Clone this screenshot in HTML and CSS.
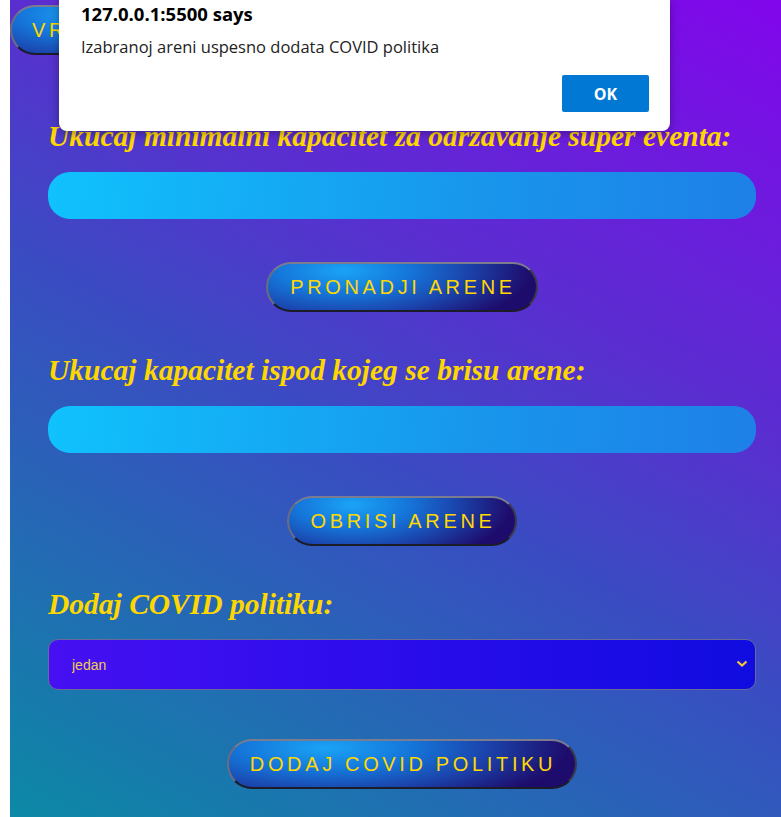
FILE: index.html
```html
<!DOCTYPE html>
<html lang="sr">
<head>
<meta charset="utf-8">
<title>Arene</title>
<link rel="stylesheet" href="styles.css">
</head>
<body>
<div class="page">
  <div class="topbar">
    <button class="btn btn-back">VRATI SE NAZAD</button>
  </div>
  <main class="content">
    <h2 class="label label-first">Ukucaj minimalni kapacitet za održavanje super eventa:</h2>
    <input class="field" type="text">
    <button class="btn btn-action">PRONADJI ARENE</button>

    <h2 class="label">Ukucaj kapacitet ispod kojeg se brisu arene:</h2>
    <input class="field" type="text">
    <button class="btn btn-action">OBRISI ARENE</button>

    <h2 class="label">Dodaj COVID politiku:</h2>
    <div class="select-wrap">
      <select class="select">
        <option>jedan</option>
      </select>
      <svg class="chevron" width="12" height="8" viewBox="0 0 12 8"><polyline points="1.5,1.5 6,5.5 10.5,1.5" fill="none" stroke="#f2c83a" stroke-width="2.2"/></svg>
    </div>
    <button class="btn btn-action btn-last">DODAJ COVID POLITIKU</button>
  </main>
</div>

<div class="dialog">
  <div class="dialog-title">127.0.0.1:5500 says</div>
  <div class="dialog-msg">Izabranoj areni uspesno dodata COVID politika</div>
  <div class="dialog-actions">
    <button class="dialog-ok">OK</button>
  </div>
</div>
</body>
</html>
```

FILE: styles.css
```css
html {
  background: #ffffff;
}
body {
  margin: 0 0 0 10px;
  min-height: 817px;
  background: linear-gradient(30deg, #0c89a5 0%, #3a4cc2 45%, #5a2ed0 65%, #8206ec 100%);
  font-family: "Liberation Sans", Arial, sans-serif;
  overflow: hidden;
}
.page {
  min-height: 817px;
}
.topbar {
  display: flex;
  padding-top: 5px;
}
.btn {
  font-family: "Liberation Sans", Arial, sans-serif;
  font-size: 20px;
  letter-spacing: 3.65px;
  color: #ffd800;
  height: 50px;
  padding: 0 20px 0 22px;
  border-radius: 25px;
  border: 2px solid;
  border-color: #7c7c90 #3a3a4a #1c1c28 #6c6c80;
  background: radial-gradient(ellipse 70% 140% at 28% 15%, #1aa4f6 0%, #1576da 35%, #1a46ae 65%, #1e0c6c 100%);
  cursor: pointer;
}
.btn-back {
  padding: 0 20px;
}
.content {
  display: flex;
  flex-direction: column;
  padding: 0 25px 0 38px;
}
.label {
  margin: 41px 0 0;
  font-family: "Liberation Serif", "Times New Roman", serif;
  font-style: italic;
  font-weight: bold;
  font-size: 29.5px;
  line-height: 34px;
  color: #ffd700;
}
.label-first {
  margin-top: 64px;
}
.field {
  margin-top: 19px;
  height: 47px;
  box-sizing: border-box;
  border: none;
  border-radius: 22px;
  background: linear-gradient(95deg, #10c2fd 0%, #1896ec 60%, #1e80e8 100%);
  outline: none;
}
.btn-action {
  align-self: center;
  margin-top: 43px;
}
.btn-last {
  margin-top: 49px;
  padding: 0 19px 0 21px;
}
.select-wrap {
  position: relative;
  margin-top: 18px;
}
.select {
  display: block;
  width: 100%;
  height: 51px;
  box-sizing: border-box;
  appearance: none;
  -webkit-appearance: none;
  border: 1px solid #6a6a9a;
  border-radius: 10px;
  padding: 0 23px;
  font-family: "Liberation Sans", Arial, sans-serif;
  font-size: 14px;
  color: #f2cc50;
  background: linear-gradient(90deg, #4610f2 0%, #2a0ceb 50%, #100ce0 100%);
}
.chevron {
  position: absolute;
  right: 8px;
  top: 21px;
}
.dialog {
  position: absolute;
  left: 59px;
  top: 0;
  width: 611px;
  height: 131px;
  box-sizing: border-box;
  background: #ffffff;
  border-radius: 0 0 8px 8px;
  box-shadow: 0 2px 10px rgba(0, 0, 0, 0.35);
  padding: 3px 21px 0 22px;
  font-family: "Open Sans", "Noto Sans", sans-serif;
}
.dialog-title {
  font-size: 18.5px;
  font-weight: bold;
  color: #000;
  line-height: 22px;
}
.dialog-msg {
  margin-top: 12px;
  font-size: 16.5px;
  color: #222;
  line-height: 20px;
}
.dialog-actions {
  display: flex;
  justify-content: flex-end;
  margin-top: 18px;
}
.dialog-ok {
  width: 87px;
  height: 37px;
  background: #0078d4;
  color: #fff;
  border: none;
  border-radius: 2px;
  font-family: "Open Sans", "Noto Sans", sans-serif;
  font-weight: bold;
  font-size: 16px;
}
```
